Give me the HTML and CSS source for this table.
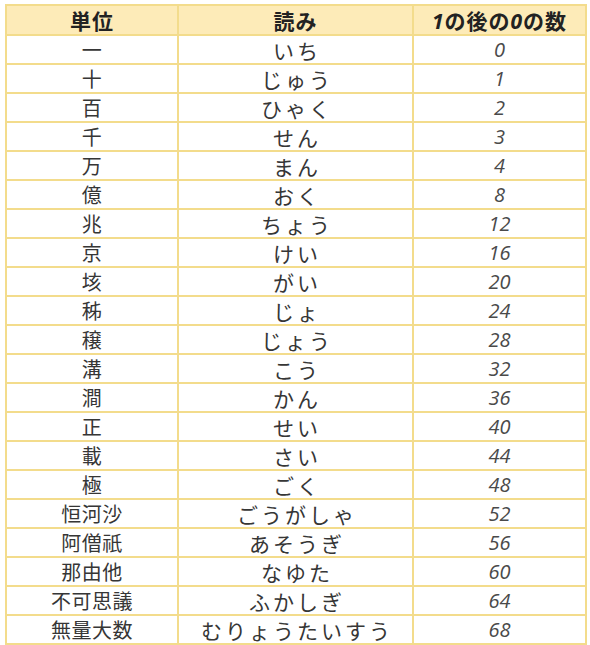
FILE: index.html
```html
<!DOCTYPE html>
<html lang="ja">
<head>
<meta charset="utf-8">
<link rel="stylesheet" href="styles.css">
</head>
<body>
<table class="units">
<colgroup><col class="c1"><col class="c2"><col class="c3"></colgroup>
<thead>
<tr><th>単位</th><th>読み</th><th><i class="n">1</i>の後の<i class="n">0</i>の数</th></tr>
</thead>
<tbody>
<tr><td>一</td><td class="kana">いち</td><td class="num">0</td></tr>
<tr><td>十</td><td class="kana">じゅう</td><td class="num">1</td></tr>
<tr><td>百</td><td class="kana">ひゃく</td><td class="num">2</td></tr>
<tr><td>千</td><td class="kana">せん</td><td class="num">3</td></tr>
<tr><td>万</td><td class="kana">まん</td><td class="num">4</td></tr>
<tr><td>億</td><td class="kana">おく</td><td class="num">8</td></tr>
<tr><td>兆</td><td class="kana">ちょう</td><td class="num">12</td></tr>
<tr><td>京</td><td class="kana">けい</td><td class="num">16</td></tr>
<tr><td>垓</td><td class="kana">がい</td><td class="num">20</td></tr>
<tr><td>秭</td><td class="kana">じょ</td><td class="num">24</td></tr>
<tr><td>穣</td><td class="kana">じょう</td><td class="num">28</td></tr>
<tr><td>溝</td><td class="kana">こう</td><td class="num">32</td></tr>
<tr><td>澗</td><td class="kana">かん</td><td class="num">36</td></tr>
<tr><td>正</td><td class="kana">せい</td><td class="num">40</td></tr>
<tr><td>載</td><td class="kana">さい</td><td class="num">44</td></tr>
<tr><td>極</td><td class="kana">ごく</td><td class="num">48</td></tr>
<tr><td>恒河沙</td><td class="kana">ごうがしゃ</td><td class="num">52</td></tr>
<tr><td>阿僧祇</td><td class="kana">あそうぎ</td><td class="num">56</td></tr>
<tr><td>那由他</td><td class="kana">なゆた</td><td class="num">60</td></tr>
<tr><td>不可思議</td><td class="kana">ふかしぎ</td><td class="num">64</td></tr>
<tr><td>無量大数</td><td class="kana">むりょうたいすう</td><td class="num">68</td></tr>
</tbody>
</table>
</body>
</html>
```
FILE: styles.css
```css
html, body {
  margin: 0;
  padding: 0;
  background: #ffffff;
}
body {
  font-family: "Noto Sans CJK JP", "Noto Sans", sans-serif;
  color: #363636;
}
.units {
  border-collapse: collapse;
  margin: 4px 0 0 5px;
  width: 580px;
  table-layout: fixed;
}
.c1 { width: 172px; }
.c2 { width: 235px; }
.c3 { width: 173px; }
.units th, .units td {
  border: 2px solid #f3dc8c;
  text-align: center;
  padding: 0;
  font-size: 20px;
  line-height: 26px;
  height: 27px;
  white-space: nowrap;
}
.units th {
  background: #fdebb8;
  font-weight: 700;
  font-size: 21px;
  color: #222222;
  height: 28px;
  letter-spacing: 1px;
}
.units td {
  font-weight: 400;
  letter-spacing: 0.5px;
}
.units td.kana {
  font-size: 21px;
  letter-spacing: 3px;
  text-indent: 3px;
}
.num, .n {
  font-style: italic;
}
.units td.num {
  font-family: "Open Sans", "Noto Sans", sans-serif;
  color: #4a4a4a;
  font-size: 20px;
  letter-spacing: 0;
}
.n {
  font-family: "Open Sans", sans-serif;
}
```
